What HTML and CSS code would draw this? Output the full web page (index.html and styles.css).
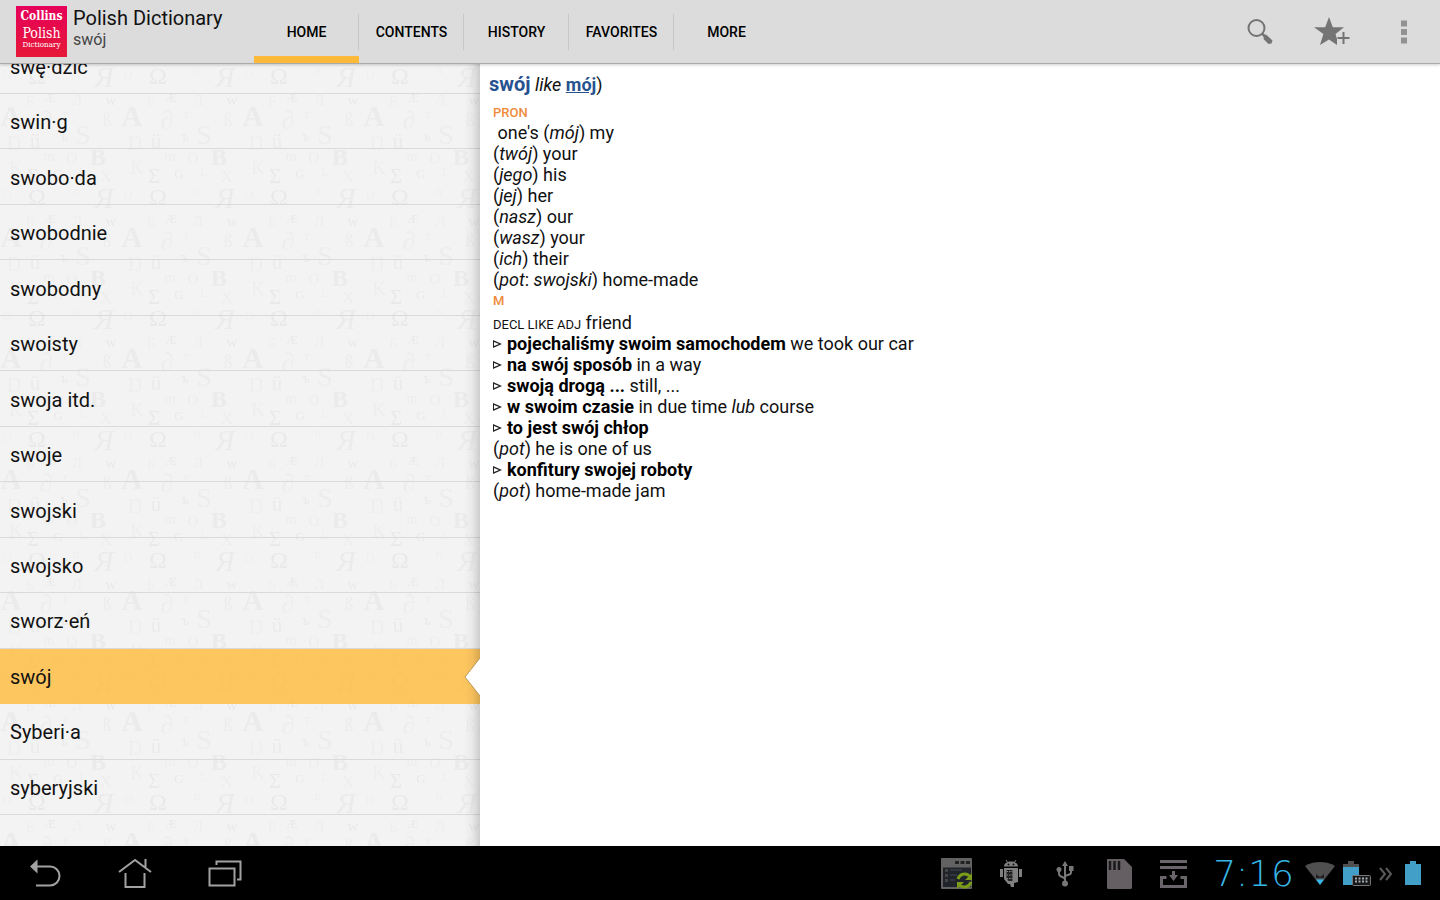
FILE: index.html
```html
<!DOCTYPE html>
<html lang="en">
<head>
<meta charset="utf-8">
<title>Polish Dictionary</title>
<link rel="stylesheet" href="styles.css">
</head>
<body>
<header class="bar">
  <div class="brand">
    <div class="logo" aria-hidden="true">
      <span class="logo-top">Collins</span>
      <span class="logo-mid">Polish</span>
      <span class="logo-low">Dictionary</span>
    </div>
    <div class="titles">
      <h1 class="title">Polish Dictionary</h1>
      <p class="subtitle">swój</p>
    </div>
  </div>
  <nav class="tabs">
    <a class="tab tab-on" href="#home">HOME</a>
    <a class="tab" href="#contents">CONTENTS</a>
    <a class="tab" href="#history">HISTORY</a>
    <a class="tab" href="#favorites">FAVORITES</a>
    <a class="tab" href="#more">MORE</a>
  </nav>
  <div class="actions">
    <button class="action" type="button" aria-label="Search">
      <svg width="40" height="40" viewBox="0 0 40 40"><circle cx="16.500" cy="16" r="8" fill="none" stroke="#747474" stroke-width="2"/><path d="M22 21.500l3 3" stroke="#747474" stroke-width="2.500"/><path d="M24 24l2-1.500 6.500 6-1 3-3 .5-5-5z" fill="#747474"/></svg>
    </button>
    <button class="action" type="button" aria-label="Add to favorites">
      <svg width="40" height="40" viewBox="0 0 40 40"><path d="M17 5l3.800 10.200H32l-8.500 6.800 1.500 5v6l-8-5.500-9 5.500 3.400-11L2 15.200h11.200z" fill="#747474"/><path d="M31.500 20v12M25.500 26h12" stroke="#dcdcdc" stroke-width="4"/><path d="M31.500 20v12M25.500 26h12" stroke="#747474" stroke-width="2"/></svg>
    </button>
    <button class="action" type="button" aria-label="Menu">
      <svg width="40" height="40" viewBox="0 0 40 40"><path d="M17 8.500h6v6h-6zM17 17h6v6h-6zM17 25.500h6v6h-6z" fill="#929292"/></svg>
    </button>
  </div>
</header>

<main class="panes">
  <section class="side">
    <svg class="texture" aria-hidden="true">
      <defs>
        <pattern id="glyphs" width="121" height="121" patternUnits="userSpaceOnUse">
          <g class="glyphs" text-anchor="middle">
            <text x="37" y="20" font-size="24">Ω</text>
            <text x="76" y="10" font-size="13" opacity=".5">n</text>
            <text x="104" y="23" font-size="29" font-style="italic" opacity=".8">Я</text>
            <text x="7" y="14" font-size="13" opacity=".5">D</text>
            <text x="50" y="38" font-size="13">Æ</text>
            <text x="77" y="41" font-size="15" opacity=".6">Л</text>
            <text x="111" y="41" font-size="15">w</text>
            <text x="30" y="42" font-size="15" opacity=".5">Б</text>
            <text x="11" y="62" font-size="29" font-weight="bold" opacity=".8">A</text>
            <text x="107" y="62" font-size="18" opacity=".7">ß</text>
            <text x="46" y="65" font-size="26" opacity=".6">∂</text>
            <text x="65" y="55" font-size="14" opacity=".6">т</text>
            <text x="83" y="80" font-size="28" opacity=".7">S</text>
            <text x="64" y="77" font-size="14">ъ</text>
            <text x="14" y="86" font-size="21" opacity=".5">Ŋ</text>
            <text x="35" y="84" font-size="21" opacity=".8">ü</text>
            <text x="49" y="97" font-size="14" opacity=".7">m</text>
            <text x="72" y="99" font-size="15" opacity=".7">O</text>
            <text x="98" y="101" font-size="24" font-weight="bold" opacity=".8">B</text>
            <text x="16" y="110" font-size="18" opacity=".6">K</text>
            <text x="33" y="119" font-size="21">Σ</text>
            <text x="58" y="114" font-size="13">G</text>
            <text x="83" y="112" font-size="13" opacity=".5">L</text>
            <text x="106" y="118" font-size="17" opacity=".6">X</text>
          </g>
        </pattern>
      </defs>
      <rect width="100%" height="100%" fill="url(#glyphs)"/>
    </svg>
    <ul class="words">
      <li class="word word-cut">swę·dzić</li>
      <li class="word">swin·g</li>
      <li class="word">swobo·da</li>
      <li class="word">swobodnie</li>
      <li class="word">swobodny</li>
      <li class="word">swoisty</li>
      <li class="word">swoja itd.</li>
      <li class="word">swoje</li>
      <li class="word">swojski</li>
      <li class="word">swojsko</li>
      <li class="word">sworz·eń</li>
      <li class="word word-on">swój<svg class="notch" width="16" height="40" viewBox="0 0 16 40" aria-hidden="true"><path d="M16 1L1 20l15 19z" fill="#fff"/><path d="M16 1L1 20l15 19" fill="none" stroke="#b99a5c"/></svg></li>
      <li class="word">Syberi·a</li>
      <li class="word">syberyjski</li>
    </ul>
  </section>

  <article class="entry">
    <h2 class="head"><b class="lemma">swój</b> <i>like</i> <a class="ref" href="#moj">mój</a>)</h2>
    <div class="senses">
      <h3 class="pos">PRON</h3>
      <p class="line">&nbsp;one's (<i>mój</i>) my</p>
      <p class="line">(<i>twój</i>) your</p>
      <p class="line">(<i>jego</i>) his</p>
      <p class="line">(<i>jej</i>) her</p>
      <p class="line">(<i>nasz</i>) our</p>
      <p class="line">(<i>wasz</i>) your</p>
      <p class="line">(<i>ich</i>) their</p>
      <p class="line">(<i>pot</i>: <i>swojski</i>) home-made</p>
      <h3 class="pos">M</h3>
      <p class="line"><span class="caps">DECL LIKE ADJ</span> friend</p>
      <p class="line phrase"><b>pojechaliśmy swoim samochodem</b> we took our car</p>
      <p class="line phrase"><b>na swój sposób</b> in a way</p>
      <p class="line phrase"><b>swoją drogą ...</b> still, ...</p>
      <p class="line phrase"><b>w swoim czasie</b> in due time <i>lub</i> course</p>
      <p class="line phrase"><b>to jest swój chłop</b></p>
      <p class="line">(<i>pot</i>) he is one of us</p>
      <p class="line phrase"><b>konfitury swojej roboty</b></p>
      <p class="line">(<i>pot</i>) home-made jam</p>
    </div>
  </article>
</main>

<footer class="system">
  <div class="keys">
    <button class="key" type="button" aria-label="Back">
      <svg width="36" height="36" viewBox="0 0 36 36"><path d="M10 11.500h13a9.500 9.500 0 0 1 0 19H9" fill="none" stroke="#a2a2a2" stroke-width="2"/><path d="M3 11.500L10.500 4.500v14z" fill="#a2a2a2"/></svg>
    </button>
    <button class="key" type="button" aria-label="Home">
      <svg width="36" height="36" viewBox="0 0 36 36"><path d="M2 17L18 5l16 12M28.500 12V4M8.500 18v14h19V18" fill="none" stroke="#a2a2a2" stroke-width="2"/></svg>
    </button>
    <button class="key" type="button" aria-label="Recent apps">
      <svg width="36" height="36" viewBox="0 0 36 36"><path d="M2.500 13.500h25v17h-25zM9.500 10V6.500h24V24.500H30" fill="none" stroke="#a2a2a2" stroke-width="2"/></svg>
    </button>
  </div>
  <div class="tray">
    <svg width="34" height="34" viewBox="0 0 34 34" aria-hidden="true"><rect x="1" y="2" width="31" height="31" rx="1" fill="#626262"/><path d="M3 11.500h28V31H3z" fill="#20242a"/><path d="M15 6.500h4M20.500 6.500h4M26 6.500h4" stroke="#222" stroke-width="3"/><path d="M5 14.500h3M5 19.500h3M5 24.500h3" stroke="#444" stroke-width="3"/><path d="M10 14h12M10 19h7M10 24h5" stroke="#30363e" stroke-width="2"/><path d="M18 23a7 7 0 0 1 11.500-3M31 26a7 7 0 0 1-11.500 3" fill="none" stroke="#7b9c18" stroke-width="3"/><path d="M32 17v7h-7zM17 33v-7h7z" fill="#7b9c18"/></svg>
    <svg width="34" height="34" viewBox="0 0 34 34" aria-hidden="true"><path d="M10 10.500c0-3 3-5 7-5s7 2 7 5z" fill="#808080"/><path d="M12 4l2 3M22 4l-2 3" stroke="#808080"/><circle cx="14.500" cy="8.500" r="1" fill="#111"/><circle cx="19.500" cy="8.500" r="1" fill="#111"/><path d="M6 13h3v8H6zM25 13h3v8h-3z" fill="#808080"/><path d="M10 12h14v14l-4 1v4h-3l-1-3h-2l-4-5z" fill="#808080"/><path d="M12.500 14h6v11h-4l-2-3z" fill="#222"/><path d="M12.500 15.500h6M12.500 19h6M12.500 22.500h6" stroke="#808080" stroke-dasharray="1.500 1"/></svg>
    <svg width="34" height="34" viewBox="0 0 34 34" aria-hidden="true"><path d="M17 27V8M17 23.500c0-3-6-2-6-5.500v-4M17 21c0-3 6-1 6-4.500V12" fill="none" stroke="#777" stroke-width="2"/><path d="M14 10l3-5 3 5zM21 10h4.500v5H21z" fill="#777"/><circle cx="11" cy="13.500" r="2.500" fill="#777"/><circle cx="17" cy="27.500" r="3" fill="#777"/></svg>
    <svg width="34" height="34" viewBox="0 0 34 34" aria-hidden="true"><path d="M5 3h17l8 8v20.500a1.500 1.500 0 0 1-1.500 1.500h-22A1.500 1.500 0 0 1 5 31.500z" fill="#655f63"/><path d="M8 5v9M12.500 5v9M17 5v9" stroke="#1b1a1b" stroke-width="2.500"/></svg>
    <svg width="34" height="34" viewBox="0 0 34 34" aria-hidden="true"><path d="M4 5.500h27M4 11.500h27" stroke="#69656a" stroke-width="3"/><path d="M10.500 21.500H5.500V30.500h24v-9h-5" fill="none" stroke="#69656a" stroke-width="3"/><path d="M16 15h3v4h3l-4.500 6-4.500-6h3z" fill="#69656a"/></svg>
    <time class="clock">7:16</time>
    <svg class="tight" width="30" height="34" viewBox="0 0 30 34" aria-hidden="true"><path d="M0 10C8 4.500 22 4.500 30 10L15 29z" fill="#505050"/><path d="M11 23.500h8L15 29z" fill="#35b5e5"/><path d="M11 18l4 3 4-3v4h-8z" fill="#222"/></svg>
    <svg class="tight" width="28" height="34" viewBox="0 0 28 34" aria-hidden="true"><path d="M0 8h5V5h6v3h5v4H0z" fill="#505050"/><path d="M0 11h16v18H0z" fill="#419fc8"/><rect x="9.500" y="19.500" width="18" height="10" rx="1" fill="#15191b" stroke="#777"/><path d="M12 22.500h14M12 25.500h14" stroke="#aaa" stroke-width="2" stroke-dasharray="2 1.500"/></svg>
    <svg class="tight" width="14" height="34" viewBox="0 0 14 34" aria-hidden="true"><path d="M1 12l5 6-5 6M7 12l5 6-5 6" fill="none" stroke="#5a5a5a" stroke-width="2"/></svg>
    <svg class="last" width="16" height="34" viewBox="0 0 16 34" aria-hidden="true"><path d="M0 8h5V5h6v3h5v21H0z" fill="#419fc8"/></svg>
  </div>
</footer>
</body>
</html>
```
FILE: styles.css
```css
* { box-sizing: border-box; }

body {
  margin: 0;
  min-height: 100vh;
  display: flex;
  flex-direction: column;
  font-family: Roboto, "Noto Sans", sans-serif;
  color: #111;
  background: #fff;
}

h1, h2, h3, p, ul { margin: 0; padding: 0; font-weight: 400; }
button { border: 0; padding: 0; background: none; display: flex; }

.bar {
  height: 64px;
  display: flex;
  align-items: stretch;
  background: #dcdcdc;
  border-bottom: 1px solid #ababab;
  box-shadow: 0 1px 3px rgba(0, 0, 0, .2);
  position: relative;
  z-index: 1;
}
.brand { flex: 0 0 254px; display: flex; padding: 6px 0 0 16px; }
.logo {
  width: 51px;
  height: 51px;
  padding-top: 3px;
  background: linear-gradient(#e6005a, #e61937);
  color: #fff;
  font-family: "DejaVu Serif Condensed", "DejaVu Serif", serif;
  text-align: center;
  white-space: nowrap;
}
.logo span { display: block; }
.logo-top { font-size: 12px; line-height: 15px; font-weight: 700; }
.logo-mid { font-size: 14px; line-height: 18px; }
.logo-low { font-size: 8px; line-height: 6px; }
.titles { padding-left: 6px; }
.title { font-size: 20px; line-height: 24px; white-space: nowrap; }
.subtitle { font-size: 16px; line-height: 20px; color: #444; }

.tabs { display: flex; }
.tab {
  width: 105px;
  display: flex;
  align-items: center;
  justify-content: center;
  font-size: 14px;
  font-weight: 500;
  color: #000;
  text-decoration: none;
  border-bottom: 7px solid transparent;
  padding-top: 7px;
  background: linear-gradient(#c8c8c8, #c8c8c8) right 14px / 1px 36px no-repeat;
}
.tab:last-child { background: none; }
.tab-on { border-bottom-color: #fdb93a; }

.actions { margin-left: auto; display: flex; align-items: center; gap: 32px; padding-right: 16px; }

.panes { flex: 1; display: flex; }
.side {
  flex: 0 0 33.333%;
  display: flex;
  position: relative;
  background: #f3f3f3;
}
.side::after {
  content: "";
  position: absolute;
  inset: 0 0 0 auto;
  width: 16px;
  background: linear-gradient(to right, transparent, rgba(0, 0, 0, .04) 50%, rgba(0, 0, 0, .16));
  pointer-events: none;
}
.texture { position: absolute; inset: 0; width: 100%; height: 100%; }
.glyphs { fill: #e9e9e9; font-family: "Liberation Serif", serif; }
.words {
  flex: 1;
  display: flex;
  flex-direction: column;
  list-style: none;
  padding-bottom: 31px;
  position: relative;
}
.word {
  flex: 1 0 55px;
  display: flex;
  align-items: center;
  padding: 2px 0 0 10px;
  border-bottom: 1px solid #dadada;
  font-size: 20px;
}
.word-cut { flex: 0 0 30px; align-items: flex-end; overflow: hidden; line-height: 52px; }
.word-on { background: rgba(255, 190, 70, .86); border-bottom-color: transparent; position: relative; }
.notch { position: absolute; right: 0; top: 8px; z-index: 1; }

.entry { flex: 1; padding: 8px 9px; font-size: 18px; line-height: 21px; }
.head { font-size: 18px; line-height: 24px; padding-bottom: 7px; }
.lemma { font-size: 20px; color: #26528f; font-weight: 700; }
.ref { color: #26528f; font-weight: 700; }
.senses { padding-left: 4px; }
.pos { font-size: 13px; line-height: 18px; font-weight: 500; color: #f08b3c; }
.line + .pos { line-height: 22px; }
.line b { font-weight: 700; color: #000; }
.caps { font-size: 13px; line-height: 13px; }
.phrase::before {
  content: "";
  display: inline-block;
  width: 9px;
  height: 8px;
  margin-right: 5px;
  vertical-align: 2px;
  background: #222;
  clip-path: polygon(evenodd, 0 0, 100% 50%, 0 100%, 0 0, 1px 2px, 1px 6px, 6px 4px, 1px 2px);
}

.system {
  height: 54px;
  display: flex;
  justify-content: space-between;
  align-items: center;
  background: #000;
}
.keys { display: flex; gap: 54px; padding-left: 27px; }
.tray { display: flex; align-items: center; gap: 20px; padding-right: 19px; }
.clock {
  font-family: "DejaVu Sans", sans-serif;
  font-weight: 200;
  font-size: 36px;
  line-height: 54px;
  padding: 2px 3px 0;
  color: #35b5e5;
}
.tight { margin-left: -12px; }
.last { margin-left: -8px; }
```
